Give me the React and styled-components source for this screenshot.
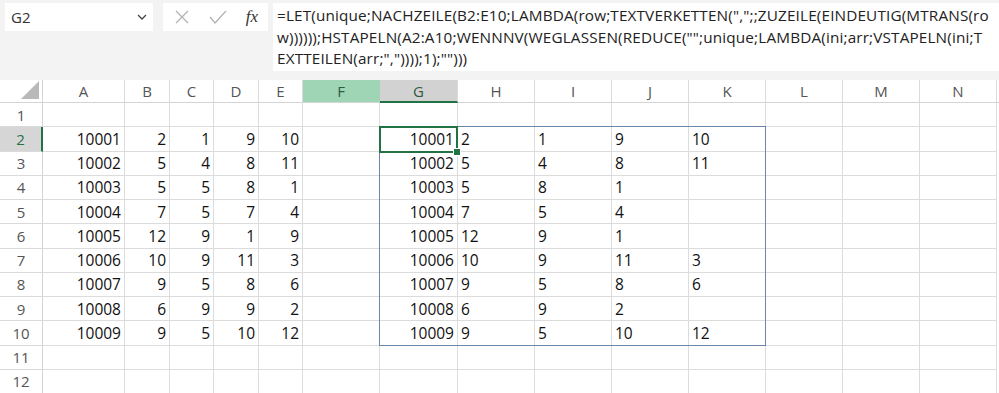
import styled, { createGlobalStyle } from 'styled-components'

const GlobalStyle = createGlobalStyle`
  html, body {
    margin: 0;
    padding: 0;
    background: #ffffff;
  }
  body {
    font-family: 'Open Sans', 'Liberation Sans', sans-serif;
    color: #1f1f1f;
  }
`

const FORMULA = [
  '=LET(unique;NACHZEILE(B2:E10;LAMBDA(row;TEXTVERKETTEN(",";;ZUZEILE(EINDEUTIG(MTRANS(ro',
  'w))))));HSTAPELN(A2:A10;WENNNV(WEGLASSEN(REDUCE("";unique;LAMBDA(ini;arr;VSTAPELN(ini;T',
  'EXTTEILEN(arr;","))));1);"")))',
]

const COLUMNS = ['A', 'B', 'C', 'D', 'E', 'F', 'G', 'H', 'I', 'J', 'K', 'L', 'M', 'N']

// A2:E10, plain numbers
const source = [
  [10001, 2, 1, 9, 10],
  [10002, 5, 4, 8, 11],
  [10003, 5, 5, 8, 1],
  [10004, 7, 5, 7, 4],
  [10005, 12, 9, 1, 9],
  [10006, 10, 9, 11, 3],
  [10007, 9, 5, 8, 6],
  [10008, 6, 9, 9, 2],
  [10009, 9, 5, 10, 12],
]

// G2:K10, spilled result (ids are numbers, the rest text)
const result = [
  [10001, '2', '1', '9', '10'],
  [10002, '5', '4', '8', '11'],
  [10003, '5', '8', '1', ''],
  [10004, '7', '5', '4', ''],
  [10005, '12', '9', '1', ''],
  [10006, '10', '9', '11', '3'],
  [10007, '9', '5', '8', '6'],
  [10008, '6', '9', '2', ''],
  [10009, '9', '5', '10', '12'],
]

export default function App() {
  const cells = []

  for (let r = 1; r <= 12; r++) {
    for (let c = 0; c < COLUMNS.length; c++) {
      const col = COLUMNS[c]
      let value = ''
      let align = 'right'
      const i = r - 2
      if (i >= 0 && i < source.length) {
        if (c <= 4) value = source[i][c]
        if (c >= 6 && c <= 10) {
          value = result[i][c - 6]
          if (c > 6) align = 'left'
        }
      }
      cells.push(
        <Cell key={`${col}${r}`} $r={r + 1} $c={c + 2} $align={align}>
          {value}
        </Cell>
      )
    }
  }

  return (
    <Page>
      <GlobalStyle />
      <TopBar>
        <NameBox>
          <span>G2</span>
          <svg width="10" height="6" viewBox="0 0 10 6">
            <polyline points="1,1 5,5 9,1" fill="none" stroke="#444" strokeWidth="1.3" />
          </svg>
        </NameBox>
        <ButtonBox>
          <svg width="16" height="16" viewBox="0 0 16 16">
            <path d="M2 2 L14 14 M14 2 L2 14" stroke="#b3b3b3" strokeWidth="1.3" fill="none" />
          </svg>
          <svg width="20" height="16" viewBox="0 0 20 16">
            <polyline points="2,8 7,14 18,2" stroke="#b3b3b3" strokeWidth="1.3" fill="none" />
          </svg>
          <Fx>fx</Fx>
        </ButtonBox>
        <FormulaBox>
          {FORMULA.map(line => (
            <FormulaLine key={line}>{line}</FormulaLine>
          ))}
        </FormulaBox>
      </TopBar>

      <Sheet>
        <Corner $r={1} $c={1}>
          <svg width="18" height="18" viewBox="0 0 18 18">
            <polygon points="18,0 18,18 0,18" fill="#b9b9b9" />
          </svg>
        </Corner>
        {COLUMNS.map((col, c) => (
          <ColHead
            key={col}
            $r={1}
            $c={c + 2}
            $state={col === 'F' ? 'spill' : col === 'G' ? 'active' : 'none'}
          >
            {col}
          </ColHead>
        ))}
        <ColHead $r={1} $c={COLUMNS.length + 2} $state="none" />
        {Array.from({ length: 12 }, (_, i) => (
          <RowHead key={i} $r={i + 2} $c={1} $active={i === 1}>
            {i + 1}
          </RowHead>
        ))}
        {cells}
        <SpillFrame />
        <Selection>
          <Handle />
        </Selection>
      </Sheet>
    </Page>
  )
}

const Page = styled.div`
  width: 999px;
  height: 393px;
  overflow: hidden;
  display: flex;
  flex-direction: column;
  background: #f3f3f3;
`

const TopBar = styled.div`
  display: flex;
  align-items: flex-start;
  gap: 10px;
  height: 80px;
  padding: 3px 0 0 5px;
  box-sizing: border-box;
  flex-shrink: 0;
`

const NameBox = styled.div`
  width: 148px;
  height: 28px;
  box-sizing: border-box;
  background: #ffffff;
  display: flex;
  align-items: center;
  justify-content: space-between;
  padding: 0 6px 0 6px;
  font-size: 15px;
  color: #333;
`

const ButtonBox = styled.div`
  width: 105px;
  height: 28px;
  background: #ffffff;
  display: flex;
  align-items: center;
  justify-content: space-between;
  padding: 0 10px 0 11px;
  box-sizing: border-box;
`

const Fx = styled.span`
  font-family: 'Liberation Serif', serif;
  font-style: italic;
  font-size: 17px;
  color: #333;
`

const FormulaBox = styled.div`
  flex: 1;
  height: 68px;
  background: #ffffff;
  padding: 2px 0 0 4px;
  box-sizing: border-box;
  overflow: hidden;
  margin-left: -5px;
`

const FormulaLine = styled.div`
  white-space: nowrap;
  font-size: 15.3px;
  line-height: 21.5px;
  letter-spacing: 0.15px;
  color: #222;
`

const Sheet = styled.div`
  position: relative;
  display: grid;
  grid-template-columns: 43px 82px 45px 44px 45px 44px 77px 78px repeat(8, 77px);
  grid-template-rows: 23px repeat(12, 24.25px);
  background: #ffffff;
  overflow: hidden;
`

const Placed = styled.div`
  grid-row: ${p => p.$r};
  grid-column: ${p => p.$c};
  box-sizing: border-box;
  min-width: 0;
`

const Corner = styled(Placed)`
  background: #ffffff;
  border-right: 1px solid #d4d4d4;
  border-bottom: 1px solid #d4d4d4;
  display: flex;
  align-items: flex-end;
  justify-content: flex-end;
  padding: 0 3px 3px 0;
`

const headBg = { spill: '#9fd4b5', active: '#d2d2d2', none: '#ffffff' }

const ColHead = styled(Placed)`
  background: ${p => headBg[p.$state]};
  border-right: 1px solid ${p => (p.$state === 'spill' ? '#9fd4b5' : '#dadada')};
  border-bottom: ${p => (p.$state === 'active' ? '2px solid #217346' : '1px solid #d4d4d4')};
  display: flex;
  align-items: center;
  justify-content: center;
  font-size: 15px;
  color: ${p => (p.$state === 'none' ? '#555' : '#2d5a40')};
`

const RowHead = styled(Placed)`
  background: ${p => (p.$active ? '#d6d6d6' : '#ffffff')};
  border-right: ${p => (p.$active ? '2px solid #217346' : '1px solid #d4d4d4')};
  border-bottom: 1px solid #dadada;
  display: flex;
  align-items: center;
  justify-content: center;
  font-size: 15px;
  color: ${p => (p.$active ? '#217346' : '#555')};
`

const Cell = styled(Placed)`
  border-right: 1px solid #dcdcdc;
  border-bottom: 1px solid #dcdcdc;
  display: flex;
  align-items: center;
  justify-content: ${p => (p.$align === 'left' ? 'flex-start' : 'flex-end')};
  padding: 0 3px;
  font-size: 15.5px;
  color: #111;
  white-space: nowrap;
`

const SpillFrame = styled.div`
  grid-row: 3 / 12;
  grid-column: 8 / 13;
  border: 1px solid #6a86a8;
  margin: -1px 0 0 -1px;
  z-index: 1;
  pointer-events: none;
`

const Selection = styled.div`
  grid-row: 3 / 4;
  grid-column: 8 / 9;
  position: relative;
  border: 2px solid #217346;
  margin: -1px 0 -1px -1px;
  z-index: 2;
  pointer-events: none;
`

const Handle = styled.div`
  position: absolute;
  right: -5px;
  bottom: -5px;
  width: 6px;
  height: 6px;
  background: #217346;
  border: 1px solid #ffffff;
`
